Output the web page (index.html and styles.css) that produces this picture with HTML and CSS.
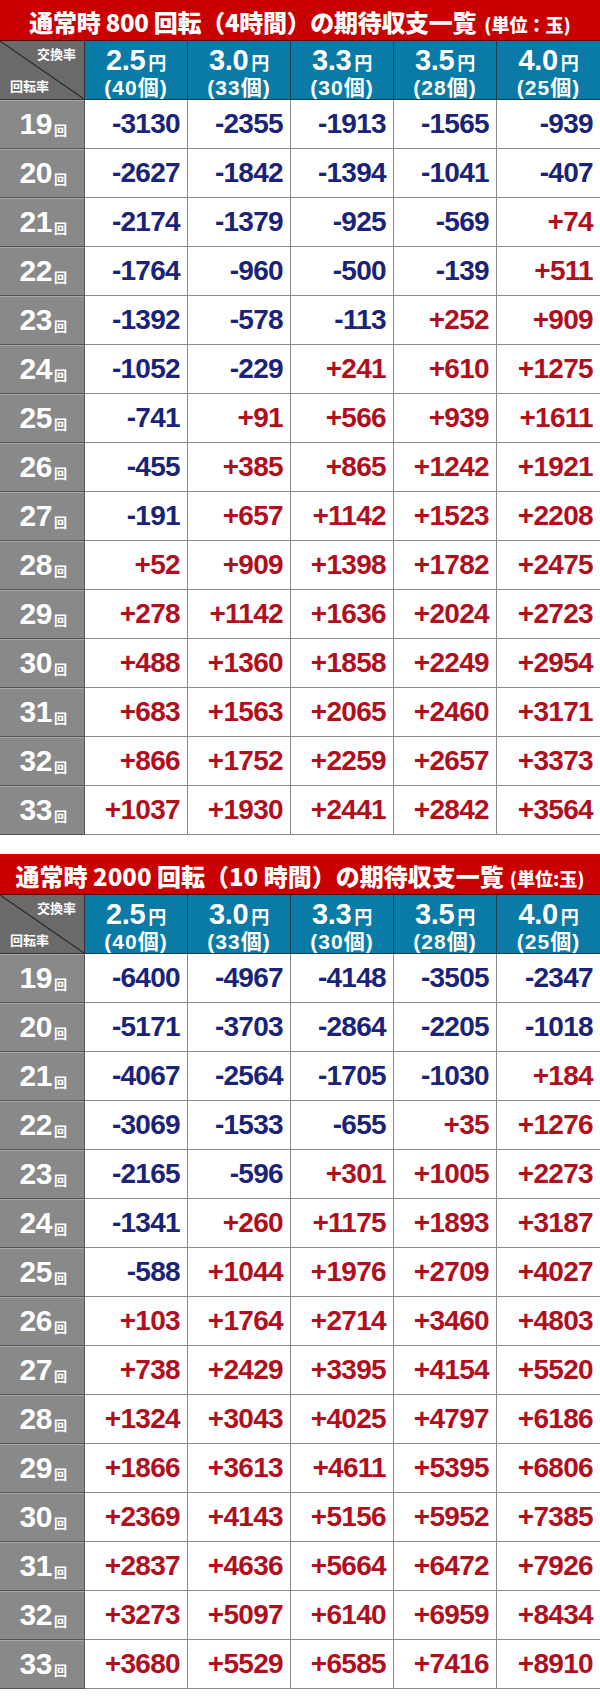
FILE: index.html
```html
<!DOCTYPE html>
<html lang="ja">
<head>
<meta charset="utf-8">
<link rel="stylesheet" href="styles.css">
</head>
<body>
<section class="tbl">
  <div class="title"><span class="main">通常時 800 回転（4時間）の期待収支一覧</span><span class="unit">(単位：玉)</span></div>
  <div class="row head">
    <div class="corner"><span class="c-top">交換率</span><span class="c-bot">回転率</span></div>
    <div class="hc"><div class="rate">2.5<small>円</small></div><div class="cnt">(40個)</div></div>
    <div class="hc"><div class="rate">3.0<small>円</small></div><div class="cnt">(33個)</div></div>
    <div class="hc"><div class="rate">3.3<small>円</small></div><div class="cnt">(30個)</div></div>
    <div class="hc"><div class="rate">3.5<small>円</small></div><div class="cnt">(28個)</div></div>
    <div class="hc"><div class="rate">4.0<small>円</small></div><div class="cnt">(25個)</div></div>
  </div>
  <div id="t1"></div>
</section>
<section class="tbl second">
  <div class="title"><span class="main">通常時 2000 回転（10 時間）の期待収支一覧</span><span class="unit">(単位:玉)</span></div>
  <div class="row head">
    <div class="corner"><span class="c-top">交換率</span><span class="c-bot">回転率</span></div>
    <div class="hc"><div class="rate">2.5<small>円</small></div><div class="cnt">(40個)</div></div>
    <div class="hc"><div class="rate">3.0<small>円</small></div><div class="cnt">(33個)</div></div>
    <div class="hc"><div class="rate">3.3<small>円</small></div><div class="cnt">(30個)</div></div>
    <div class="hc"><div class="rate">3.5<small>円</small></div><div class="cnt">(28個)</div></div>
    <div class="hc"><div class="rate">4.0<small>円</small></div><div class="cnt">(25個)</div></div>
  </div>
  <div id="t2"></div>
</section>
<script src="script.js"></script>
</body>
</html>
```
FILE: script.js
```js
const d1 = [
  [-3130,-2355,-1913,-1565,-939],
  [-2627,-1842,-1394,-1041,-407],
  [-2174,-1379,-925,-569,74],
  [-1764,-960,-500,-139,511],
  [-1392,-578,-113,252,909],
  [-1052,-229,241,610,1275],
  [-741,91,566,939,1611],
  [-455,385,865,1242,1921],
  [-191,657,1142,1523,2208],
  [52,909,1398,1782,2475],
  [278,1142,1636,2024,2723],
  [488,1360,1858,2249,2954],
  [683,1563,2065,2460,3171],
  [866,1752,2259,2657,3373],
  [1037,1930,2441,2842,3564]
];
const d2 = [
  [-6400,-4967,-4148,-3505,-2347],
  [-5171,-3703,-2864,-2205,-1018],
  [-4067,-2564,-1705,-1030,184],
  [-3069,-1533,-655,35,1276],
  [-2165,-596,301,1005,2273],
  [-1341,260,1175,1893,3187],
  [-588,1044,1976,2709,4027],
  [103,1764,2714,3460,4803],
  [738,2429,3395,4154,5520],
  [1324,3043,4025,4797,6186],
  [1866,3613,4611,5395,6806],
  [2369,4143,5156,5952,7385],
  [2837,4636,5664,6472,7926],
  [3273,5097,6140,6959,8434],
  [3680,5529,6585,7416,8910]
];
function build(id, data) {
  const host = document.getElementById(id);
  data.forEach((vals, i) => {
    const row = document.createElement('div');
    row.className = 'row';
    const lbl = document.createElement('div');
    lbl.className = 'lbl';
    lbl.innerHTML = (19 + i) + '<small>回</small>';
    row.appendChild(lbl);
    vals.forEach(v => {
      const c = document.createElement('div');
      c.className = 'v ' + (v < 0 ? 'neg' : 'pos');
      c.textContent = v < 0 ? String(v) : '+' + v;
      row.appendChild(c);
    });
    host.appendChild(row);
  });
}
build('t1', d1);
build('t2', d2);
```
FILE: styles.css
```css
* { box-sizing: border-box; margin: 0; padding: 0; }
body {
  margin: 0;
  background: #fff;
  width: 600px;
  font-family: "Liberation Sans", "Noto Sans CJK JP", sans-serif;
}
.tbl { width: 600px; }
.second { margin-top: 19px; }

.title {
  height: 41px;
  background: #c90000;
  border-bottom: 1px solid #5a0000;
  color: #fff;
  display: flex;
  align-items: baseline;
  justify-content: center;
  padding-top: 4px;
  font-family: "Noto Sans CJK JP", sans-serif;
  font-weight: 900;
  white-space: nowrap;
}
.title .main { font-size: 24px; letter-spacing: -0.3px; }
.title .unit { font-size: 18px; margin-left: 8px; }
.second .title .main { font-size: 24px; letter-spacing: 0px; }
.second .title .unit { margin-left: 6px; }

.row {
  display: grid;
  grid-template-columns: 85px repeat(5, 103px);
  height: 49px;
}
.head { height: 59px; }

.corner {
  background: linear-gradient(to top right, #6a6a6a calc(50% - 1px), #1e1e1e 50%, #6a6a6a calc(50% + 1px));
  border-right: 1px solid #333;
  border-bottom: 1px solid #333;
  display: flex;
  flex-direction: column;
  justify-content: space-between;
  padding: 5px 8px 5px 10px;
  color: #fff;
  font-family: "Noto Sans CJK JP", sans-serif;
  font-weight: 700;
  font-size: 13px;
  line-height: 16px;
}
.c-top { align-self: flex-end; }
.c-bot { align-self: flex-start; }

.hc {
  background: #0a7ba6;
  border-right: 1px solid #1c3c4e;
  border-bottom: 1px solid #1c3c4e;
  color: #fff;
  display: flex;
  flex-direction: column;
  align-items: center;
  padding-top: 6px;
  font-weight: 700;
}
.hc:last-child { border-right: none; }
.rate { font-size: 29px; line-height: 27px; letter-spacing: -0.3px; }
.rate small {
  font-family: "Noto Sans CJK JP", sans-serif;
  font-size: 18px;
  margin-left: 3px;
  font-weight: 700;
}
.cnt {
  font-family: "Liberation Sans", "Noto Sans CJK JP", sans-serif;
  font-size: 21px;
  line-height: 22px;
  letter-spacing: 1px;
  margin-top: 1px;
}

.lbl {
  background: #898989;
  border-right: 1px solid #555;
  border-bottom: 1px solid #555;
  box-shadow: inset 0 1px 0 #a8a8a8;
  color: #fff;
  font-weight: 700;
  font-size: 30px;
  display: flex;
  align-items: center;
  justify-content: center;
  padding-left: 2px;
  letter-spacing: -0.5px;
}
.lbl small {
  font-family: "Noto Sans CJK JP", sans-serif;
  font-size: 13px;
  font-weight: 700;
  margin-left: 2px;
  margin-top: 10px;
}

.v {
  border-right: 1px solid #8a8a8a;
  border-bottom: 1px solid #8a8a8a;
  display: flex;
  align-items: center;
  justify-content: flex-end;
  padding-right: 7px;
  font-size: 28px;
  font-weight: 700;
  letter-spacing: -0.7px;
}
.v:last-child { border-right: none; }
.neg { color: #1b2379; }
.pos { color: #b10f1e; }
```
